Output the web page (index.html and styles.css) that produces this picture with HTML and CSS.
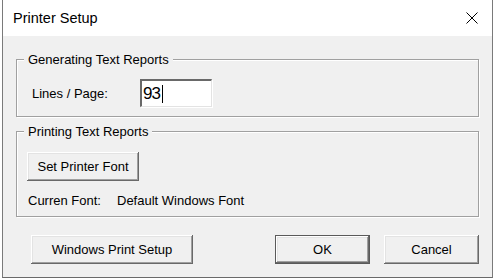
FILE: index.html
```html
<!DOCTYPE html>
<html lang="en">
<head>
  <meta charset="UTF-8" />
  <title>Printer Setup</title>
  <link rel="stylesheet" href="styles.css">
</head>
<body>

  <div class="window">
    <div class="titlebar">
      <span class="title">Printer Setup</span>
      <svg class="close" width="12" height="12" viewBox="0 0 12 12">
        <path d="M0.5 0.5 L11.5 11.5 M11.5 0.5 L0.5 11.5" stroke="#000" stroke-width="1" fill="none" />
      </svg>
    </div>

    <div class="dialog">
      <fieldset class="group group-gen">
        <legend>Generating Text Reports</legend>
        <div class="row">
          <label class="field-label" for="lines">Lines / Page:</label>
          <div class="textbox" id="lines"><span>93</span><span class="caret"></span></div>
        </div>
      </fieldset>

      <fieldset class="group group-print">
        <legend>Printing Text Reports</legend>
        <button class="btn btn-font">Set Printer Font</button>
        <div class="font-row">
          <span class="font-label">Curren Font:</span>
          <span>Default Windows Font</span>
        </div>
      </fieldset>

      <div class="actions">
        <button class="btn btn-wide">Windows Print Setup</button>
        <div class="spacer"></div>
        <button class="btn btn-default">OK</button>
        <button class="btn">Cancel</button>
      </div>
    </div>
  </div>

</body>
</html>
```

FILE: styles.css
```css
body {
  margin: 0;
  padding: 0;
  background: #fff;
  font-family: 'Liberation Sans', Arial, sans-serif;
  font-size: 13px;
  color: #000;
}

.window {
  width: 491px;
  height: 278px;
  margin-left: 2px;
  box-sizing: border-box;
  border-left: 1px solid #7a7a7a;
  border-right: 1px solid #7a7a7a;
  border-bottom: 1px solid #6a6a6a;
  display: flex;
  flex-direction: column;
}

.titlebar {
  height: 36px;
  flex: none;
  background: #fff;
  display: flex;
  align-items: center;
  justify-content: space-between;
  padding: 0 14px 0 10px;
}

.title {
  font-size: 14.5px;
}

.dialog {
  flex: 1;
  background: #f0f0f0;
  padding: 16px 13px 0 13px;
}

.group {
  margin: 0;
  min-width: 0;
  border: 1px solid #a0a0a0;
  box-shadow: 1px 1px 0 #fff, inset 1px 1px 0 #fff;
}

.group legend {
  margin-left: 0;
  padding: 0 4px;
  line-height: 15px;
  background: #f0f0f0;
}

.group-gen {
  padding: 12px 0 9px 7px;
}

.row {
  display: flex;
  align-items: center;
  padding-left: 8px;
}

.field-label {
  width: 108px;
}

.textbox {
  width: 72px;
  height: 28px;
  box-sizing: border-box;
  background: #fff;
  border-top: 2px solid #696969;
  border-left: 2px solid #696969;
  border-right: 1px solid #e3e3e3;
  border-bottom: 1px solid #e3e3e3;
  box-shadow: 1px 1px 0 #fff;
  display: flex;
  align-items: center;
  padding-left: 1px;
  font-size: 17px;
  letter-spacing: -1px;
}

.caret {
  width: 1px;
  height: 18px;
  margin-left: 2px;
  background: #000;
}

.group-print {
  margin-top: 7px;
  padding: 13px 0 8px 7px;
}

.btn {
  font-family: inherit;
  font-size: 13px;
  color: #000;
  height: 29px;
  padding: 0;
  background: #f0f0f0;
  border: none;
  box-shadow: inset -1px -1px 0 #696969, inset 1px 1px 0 #fff, inset -2px -2px 0 #a0a0a0, inset 2px 2px 0 #e3e3e3;
}

.btn-font {
  display: block;
  width: 112px;
  margin-left: 3px;
}

.font-row {
  display: flex;
  margin: 12px 0 0 4px;
  line-height: 15px;
}

.font-label {
  width: 89px;
}

.actions {
  display: flex;
  gap: 14px;
  margin-top: 18px;
  padding-left: 15px;
}

.btn-wide {
  width: 162px;
}

.spacer {
  flex: 1;
}

.actions .btn:not(.btn-wide) {
  width: 95px;
}

.btn-default {
  border: 1px solid #5a5a5a;
}
```
